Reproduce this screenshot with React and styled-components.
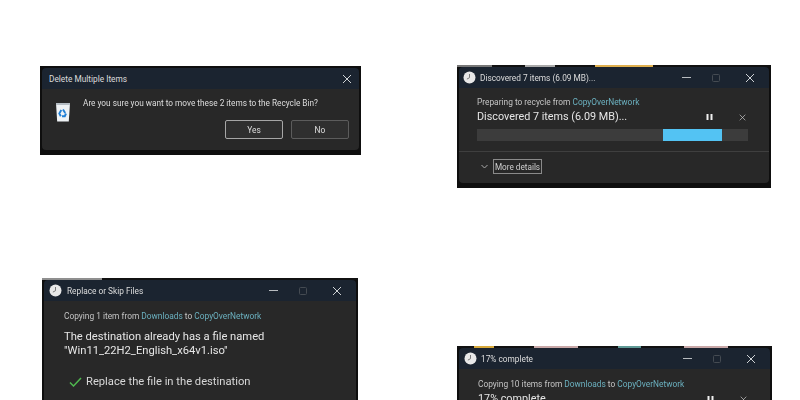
import React from "react";
import styled, { createGlobalStyle } from "styled-components";

const GlobalStyle = createGlobalStyle`
  html, body {
    margin: 0;
    height: 100%;
    background: #fff;
    overflow: hidden;
  }
  body {
    font-family: Roboto, "Open Sans", sans-serif;
  }
`;

const Page = styled.div`
  width: 800px;
  height: 400px;
  overflow: hidden;
  display: grid;
  grid-template-columns: 456px 344px;
  filter: blur(0.55px);
`;

const Column = styled.div`
  display: flex;
  flex-direction: column;
  padding-top: ${(p) => p.$top}px;
  padding-left: ${(p) => p.$left}px;
  gap: ${(p) => p.$gap}px;
`;

const Window = styled.div`
  width: ${(p) => p.$width}px;
  margin-left: ${(p) => p.$shift || 0}px;
  flex-shrink: 0;
  background: #0e0e0e;
  padding: 2px 2px 5px;
  box-sizing: border-box;
  color: #e4e4e4;
`;

const Strip = styled.div`
  display: flex;
  height: 2px;
  margin: -2px -2px 0;
  background: #111;
`;

const StripPart = styled.span`
  width: ${(p) => p.$w}px;
  background: ${(p) => p.$c};
`;

const TitleBar = styled.div`
  height: 21px;
  background: #1b2430;
  display: flex;
  align-items: center;
  padding-left: ${(p) => p.$pad || 9}px;
  font-size: 8.3px;
  color: #dcdcdc;
  border-radius: 4px 4px 0 0;
`;

const TitleText = styled.span`
  flex: 1;
  white-space: nowrap;
  margin-left: ${(p) => p.$gap || 0}px;
`;

const Clock = styled.svg`
  width: 13px;
  height: 13px;
  flex-shrink: 0;
`;

const WinButtons = styled.div`
  display: flex;
  align-items: center;
`;

const WinButton = styled.span`
  width: ${(p) => p.$w || 30}px;
  display: flex;
  justify-content: center;
  align-items: center;
  color: #cfd3d6;
`;

const Body = styled.div`
  background: #282828;
  border-radius: 0 0 4px 4px;
`;

const Section = styled.div`
  padding: ${(p) => p.$pad};
`;

const ConfirmRow = styled.div`
  display: flex;
  align-items: flex-start;
  gap: 12px;
  padding: 8px 0 0 13px;
`;

const BinIcon = styled.svg`
  flex-shrink: 0;
  margin: 5px 0 -2px;
`;

const Question = styled.div`
  font-size: 8.25px;
  line-height: 12px;
  color: #dedede;
  white-space: nowrap;
`;

const ButtonRow = styled.div`
  display: flex;
  justify-content: flex-end;
  gap: 8px;
  padding: 0 10px 11px 0;
`;

const DialogButton = styled.div`
  width: 58px;
  height: 19px;
  box-sizing: border-box;
  border: 1px solid ${(p) => (p.$primary ? "#a6a6a6" : "#5c5c5c")};
  border-radius: 2px;
  background: #2f2f2f;
  font-size: 8.4px;
  display: flex;
  align-items: center;
  justify-content: center;
  color: #dedede;
`;

const Caption = styled.div`
  font-size: 8.35px;
  line-height: 12px;
  color: #c4c4c4;
  white-space: nowrap;
`;

const FolderLink = styled.span`
  color: #6bb0bf;
`;

const Heading = styled.div`
  font-size: ${(p) => p.$size || 11.2}px;
  line-height: ${(p) => p.$line || 16}px;
  margin-top: ${(p) => p.$top || 0}px;
  color: #e6e6e6;
  white-space: nowrap;
`;

const StatusRow = styled.div`
  display: flex;
  align-items: center;
  margin-top: 1px;
`;

const StatusIcons = styled.div`
  margin-left: auto;
  display: flex;
  align-items: center;
  gap: 26px;
  padding-right: 2px;
`;

const SmallClose = styled.span`
  display: flex;
  width: 7px;
  color: #c8c8c8;
`;

const Track = styled.div`
  height: 12px;
  margin-top: 4px;
  background: #3c3c3c;
  display: flex;
  padding-left: 186px;
`;

const Fill = styled.div`
  width: 59px;
  background: #53c3f3;
`;

const Divider = styled.div`
  height: 1px;
  background: #3f3f3f;
`;

const Footer = styled.div`
  height: 31px;
  box-sizing: border-box;
  padding: 0 0 2px 22px;
  display: flex;
  align-items: center;
  gap: 5px;
`;

const MoreDetails = styled.div`
  height: 15px;
  width: 49px;
  box-sizing: border-box;
  border: 1px solid #8a8a8a;
  font-size: 8.2px;
  display: flex;
  align-items: center;
  justify-content: center;
  color: #cfcfcf;
  white-space: nowrap;
`;

const OptionRow = styled.div`
  display: flex;
  align-items: center;
  gap: 4px;
  margin: 18px 0 0 5px;
  font-size: 11.2px;
  color: #d8d8d8;
  white-space: nowrap;
`;

const ClockIcon = () => (
  <Clock viewBox="0 0 13 13">
    <circle cx="6.5" cy="6.5" r="6" fill="#e8e8e8" />
    <path d="M6.5 3v3.7l-2.6 1.4" stroke="#7a7a7a" strokeWidth="1" fill="none" />
  </Clock>
);

const CloseIcon = ({ size = 10 }) => (
  <svg width={size} height={size} viewBox="0 0 10 10">
    <path d="M1 1l8 8M9 1l-8 8" stroke="currentColor" strokeWidth="1" />
  </svg>
);

const TitleButtons = () => (
  <WinButtons>
    <WinButton>
      <svg width="9" height="9" viewBox="0 0 9 9">
        <path d="M0 4.5h9" stroke="#b8bcc0" strokeWidth="1" />
      </svg>
    </WinButton>
    <WinButton>
      <svg width="8" height="8" viewBox="0 0 8 8">
        <rect x=".5" y=".5" width="7" height="7" rx="1" fill="none" stroke="#454b52" />
      </svg>
    </WinButton>
    <WinButton $w={38}>
      <CloseIcon />
    </WinButton>
  </WinButtons>
);

const TransferIcons = () => (
  <StatusIcons>
    <svg width="7" height="8" viewBox="0 0 7 8">
      <path d="M.5 1h2v6h-2zM4.500 1h2v6h-2z" fill="#f0f0f0" />
    </svg>
    <SmallClose>
      <CloseIcon size={7} />
    </SmallClose>
  </StatusIcons>
);

const RecycleBin = () => (
  <BinIcon width="16" height="20" viewBox="0 0 16 20">
    <path d="M1 1h14l-1.200 18.500H2.200z" fill="#eef2f5" />
    <path d="M1 1h14v2H1z" fill="#b4bcc3" />
    <path
      d="M8 7.500l2.200 3.400M11 11.500l-1.200 2.700H7M5.800 14.200L4.300 11.500l2-3.400"
      stroke="#1f7fd6"
      strokeWidth="1.900"
      fill="none"
    />
  </BinIcon>
);

export default function App() {
  return (
    <Page>
      <GlobalStyle />
      <Column $top={66} $left={40} $gap={123}>
        <Window $width={321}>
          <TitleBar $pad={7}>
            <TitleText>Delete Multiple Items</TitleText>
            <WinButton $w={24}>
              <CloseIcon />
            </WinButton>
          </TitleBar>
          <Body>
            <ConfirmRow>
              <RecycleBin />
              <Question>Are you sure you want to move these 2 items to the Recycle Bin?</Question>
            </ConfirmRow>
            <ButtonRow>
              <DialogButton $primary>Yes</DialogButton>
              <DialogButton>No</DialogButton>
            </ButtonRow>
          </Body>
        </Window>

        <Window $width={316} $shift={2}>
          <Strip>
            <StripPart $w={60} $c="#8f8f8f" />
          </Strip>
          <TitleBar $pad={5}>
            <ClockIcon />
            <TitleText $gap={5}>Replace or Skip Files</TitleText>
            <TitleButtons />
          </TitleBar>
          <Body>
            <Section $pad="9px 20px 20px">
              <Caption>
                Copying 1 item from <FolderLink>Downloads</FolderLink> to <FolderLink>CopyOverNetwork</FolderLink>
              </Caption>
              <Heading $top={8} $line={13.5}>
                The destination already has a file named
                <br />
                "Win11_22H2_English_x64v1.iso"
              </Heading>
              <OptionRow>
                <svg width="13" height="10" viewBox="0 0 13 10">
                  <path d="M1 5.500l3.500 3.500L12 1" stroke="#4fb84f" strokeWidth="1.500" fill="none" />
                </svg>
                Replace the file in the destination
              </OptionRow>
            </Section>
          </Body>
        </Window>
      </Column>

      <Column $top={65} $left={1} $gap={158}>
        <Window $width={314}>
          <Strip>
            <StripPart $w={35} $c="#777" />
            <StripPart $w={33} $c="#111" />
            <StripPart $w={30} $c="#aaa" />
            <StripPart $w={40} $c="#111" />
            <StripPart $w={58} $c="#e0b04e" />
          </Strip>
          <TitleBar $pad={4}>
            <ClockIcon />
            <TitleText $gap={4}>Discovered 7 items (6.09 MB)...</TitleText>
            <TitleButtons />
          </TitleBar>
          <Body>
            <Section $pad="8px 21px 10px 18px">
              <Caption>
                Preparing to recycle from <FolderLink>CopyOverNetwork</FolderLink>
              </Caption>
              <StatusRow>
                <Heading $size={10.8}>Discovered 7 items (6.09 MB)...</Heading>
                <TransferIcons />
              </StatusRow>
              <Track>
                <Fill />
              </Track>
            </Section>
            <Divider />
            <Footer>
              <svg width="7" height="5" viewBox="0 0 7 5">
                <path d="M.5 1l3 3 3-3" stroke="#aaa" fill="none" />
              </svg>
              <MoreDetails>More details</MoreDetails>
            </Footer>
          </Body>
        </Window>

        <Window $width={315}>
          <Strip>
            <StripPart $w={17} $c="#111" />
            <StripPart $w={20} $c="#d8a93a" />
            <StripPart $w={40} $c="#111" />
            <StripPart $w={44} $c="#c9a8a8" />
            <StripPart $w={40} $c="#111" />
            <StripPart $w={23} $c="#5f9a96" />
            <StripPart $w={43} $c="#111" />
            <StripPart $w={44} $c="#c9a8a8" />
          </Strip>
          <TitleBar $pad={5}>
            <ClockIcon />
            <TitleText $gap={4}>17% complete</TitleText>
            <TitleButtons />
          </TitleBar>
          <Body>
            <Section $pad="9px 21px 20px 19px">
              <Caption>
                Copying 10 items from <FolderLink>Downloads</FolderLink> to <FolderLink>CopyOverNetwork</FolderLink>
              </Caption>
              <StatusRow>
                <Heading $size={10.8}>17% complete</Heading>
                <TransferIcons />
              </StatusRow>
            </Section>
          </Body>
        </Window>
      </Column>
    </Page>
  );
}
